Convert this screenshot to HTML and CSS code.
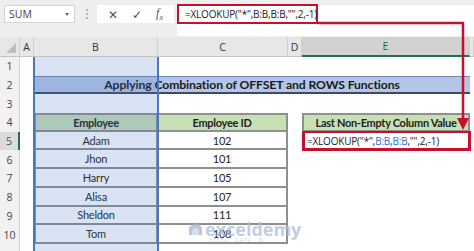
FILE: index.html
```html
<!DOCTYPE html>
<html lang="en">
<head>
    <meta charset="UTF-8">
    <title>XLOOKUP last non-empty value</title>
    <link rel="stylesheet" href="styles.css">
</head>
<body>
<div class="app">
    <div class="ribbon">
        <div class="namebox">SUM<span class="caret"></span></div>
        <div class="grip"><i></i><i></i><i></i></div>
        <div class="fbtns">
            <span class="btn">&#x2715;</span>
            <span class="btn">&#x2713;</span>
            <span class="btn fx">f<sub>x</sub></span>
        </div>
        <div class="fbar">
            <div class="fbox">=XLOOKUP("*",B:B,B:B,"",2,-1)</div>
        </div>
    </div>

    <div class="sheet">
        <!-- column headers -->
        <div class="ch corner"><span class="tri"></span></div>
        <div class="ch">A</div>
        <div class="ch">B</div>
        <div class="ch">C</div>
        <div class="ch">D</div>
        <div class="ch active">E</div>
        <div class="ch"></div>

        <!-- row 1 -->
        <div class="rh">1</div>
        <div class="c"></div><div class="c"></div><div class="c"></div><div class="c"></div><div class="c"></div><div class="c"></div>

        <!-- row 2 -->
        <div class="rh">2</div>
        <div class="c"></div>
        <div class="c title">Applying Combination of OFFSET and ROWS Functions</div>
        <div class="c"></div>

        <!-- row 3 -->
        <div class="rh">3</div>
        <div class="c"></div><div class="c"></div><div class="c"></div><div class="c"></div><div class="c"></div><div class="c"></div>

        <!-- row 4 -->
        <div class="rh">4</div>
        <div class="c"></div>
        <div class="c t th first top">Employee</div>
        <div class="c t th top">Employee ID</div>
        <div class="c"></div>
        <div class="c t th first top">Last Non-Empty Column Value</div>
        <div class="c"></div>

        <!-- row 5 -->
        <div class="rh active">5</div>
        <div class="c"></div>
        <div class="c t first">Adam</div>
        <div class="c t">102</div>
        <div class="c"></div>
        <div class="c result">=XLOOKUP("*",<span class="ref">B:B</span>,<span class="ref">B:B</span>,"",2,-1)</div>
        <div class="c"></div>

        <div class="rh">6</div>
        <div class="c"></div>
        <div class="c t first">Jhon</div>
        <div class="c t">101</div>
        <div class="c"></div><div class="c"></div><div class="c"></div>

        <div class="rh">7</div>
        <div class="c"></div>
        <div class="c t first">Harry</div>
        <div class="c t">105</div>
        <div class="c"></div><div class="c"></div><div class="c"></div>

        <div class="rh">8</div>
        <div class="c"></div>
        <div class="c t first">Alisa</div>
        <div class="c t">107</div>
        <div class="c"></div><div class="c"></div><div class="c"></div>

        <div class="rh">9</div>
        <div class="c"></div>
        <div class="c t first">Sheldon</div>
        <div class="c t">111</div>
        <div class="c"></div><div class="c"></div><div class="c"></div>

        <div class="rh">10</div>
        <div class="c"></div>
        <div class="c t first">Tom</div>
        <div class="c t">108</div>
        <div class="c"></div><div class="c"></div><div class="c"></div>

        <div class="rh"></div>
        <div class="c"></div><div class="c"></div><div class="c"></div><div class="c"></div><div class="c"></div><div class="c"></div>
    </div>

    <!-- range highlight of B:B while editing -->
    <div class="rangesel"></div>

    <svg class="arrow" width="474" height="251" viewBox="0 0 474 251">
        <polyline points="318,23 463,23 463,121" fill="none" stroke="#c8102e" stroke-width="2.5"/>
        <polygon points="457,118 469,118 463,130" fill="#c8102e"/>
    </svg>

    <div class="watermark">
        <svg width="15" height="15" viewBox="0 0 15 15">
            <path d="M7.5 1 L14 6.5 L14 14 L1 14 L1 6.5 Z" fill="#9fb3d4"/>
            <path d="M4 9 L7.5 6 L11 9 L11 14 L4 14 Z" fill="#c9d5e8"/>
        </svg>
        <div class="wm-text">
            <div class="wm-name">exceldemy</div>
            <div class="wm-sub">EXCEL &middot; DATA &middot; BI</div>
        </div>
    </div>
</div>
</body>
</html>
```

FILE: styles.css
```css
body {
    margin: 0;
    background: #fff;
    font-family: Lato, "Liberation Sans", sans-serif;
}
.app {
    position: relative;
    width: 474px;
    height: 251px;
    overflow: hidden;
}

/* formula bar area */
.ribbon {
    height: 37px;
    background: #eeeeee;
    display: flex;
    align-items: flex-start;
    padding-top: 5px;
    box-sizing: border-box;
    font-family: "Open Sans", "Liberation Sans", sans-serif;
    color: #444;
}
.namebox {
    position: relative;
    margin-left: 4px;
    width: 71px;
    height: 18px;
    background: #fff;
    border: 1px solid #d4d4d4;
    box-sizing: border-box;
    padding-left: 4px;
    font-size: 10.5px;
    line-height: 16px;
}
.caret {
    position: absolute;
    right: 5px;
    top: 7px;
    border-left: 2.5px solid transparent;
    border-right: 2.5px solid transparent;
    border-top: 3px solid #666;
}
.grip {
    width: 2px;
    margin: 4px 9px 0 11px;
    display: flex;
    flex-direction: column;
    gap: 2px;
}
.grip i {
    width: 2px;
    height: 2px;
    background: #b5b5b5;
}
.fbtns {
    width: 77px;
    height: 18px;
    background: #fff;
    display: flex;
    align-items: center;
    justify-content: space-around;
    padding: 0 4px;
    box-sizing: border-box;
}
.btn {
    font-size: 12px;
    color: #555;
}
.fx {
    font-family: "Liberation Serif", serif;
    font-style: italic;
    font-size: 12px;
}
.fx sub {
    font-size: 8px;
}
.fbar {
    flex: 1;
    margin-left: 3px;
    height: 31px;
    background: #fff;
}
.fbox {
    width: 141px;
    height: 20px;
    border: 2px solid #c8102e;
    box-sizing: border-box;
    padding-left: 6px;
    font-size: 10px;
    letter-spacing: -0.2px;
    line-height: 16px;
    white-space: nowrap;
    color: #222;
    margin-top: -1px;
}

/* worksheet grid */
.sheet {
    display: grid;
    grid-template-columns: 20px 14px 124px 130px 14px 168px 4px;
    grid-template-rows: 20px repeat(11, 18.7px);
}
.ch {
    background: #e7e7e7;
    border-right: 1px solid #d0d0d0;
    border-bottom: 1px solid #c4c4c4;
    box-sizing: border-box;
    display: flex;
    align-items: center;
    justify-content: center;
    font-family: "Open Sans", "Liberation Sans", sans-serif;
    font-size: 10.5px;
    color: #333;
}
.ch.active {
    background: #d2d2d2;
    border-bottom: 2px solid #217346;
    color: #1e6b3f;
}
.corner {
    position: relative;
}
.tri {
    position: absolute;
    right: 3px;
    bottom: 3px;
    border-left: 10px solid transparent;
    border-bottom: 10px solid #bdbdbd;
}
.rh {
    background: #f1f1f1;
    border-right: 1px solid #d0d0d0;
    box-sizing: border-box;
    display: flex;
    align-items: center;
    justify-content: center;
    font-family: "Open Sans", "Liberation Sans", sans-serif;
    font-size: 10.5px;
    color: #444;
}
.rh.active {
    background: #dcdcdc;
    border-right: 2px solid #217346;
    color: #1e6b3f;
}
.c {
    box-sizing: border-box;
    display: flex;
    align-items: center;
    justify-content: center;
    font-size: 11px;
    letter-spacing: -0.2px;
    color: #222;
    white-space: nowrap;
}
.title {
    grid-column: span 4;
    background: #b4c6e7;
    border-top: 1px solid #6f86b0;
    border-bottom: 2px solid #3d4a60;
    font-weight: bold;
    font-size: 12.2px;
    letter-spacing: -0.1px;
    color: #1a1a1a;
}
.t {
    border-right: 2px solid #8f8f8f;
    border-bottom: 2px solid #8f8f8f;
}
.t.first {
    border-left: 2px solid #8f8f8f;
}
.t.top {
    border-top: 2px solid #8f8f8f;
}
.th {
    background: #c6e0b4;
    font-weight: bold;
    font-size: 11px;
    letter-spacing: -0.3px;
}
.result {
    justify-content: flex-start;
    padding-left: 2px;
    margin: -1px -1px -1px 0;
    border: 3px solid #c8102e;
    border-top-width: 2px;
    font-family: "Open Sans", "Liberation Sans", sans-serif;
    font-size: 10px;
    letter-spacing: -0.2px;
}
.ref {
    color: #2f6fd6;
}

/* overlays */
.rangesel {
    position: absolute;
    left: 33px;
    top: 57px;
    width: 126px;
    height: 200px;
    border-left: 2px solid #4a78c8;
    border-right: 2px solid #4a78c8;
    background: rgba(68, 114, 196, 0.2);
    box-sizing: border-box;
}
.arrow {
    position: absolute;
    left: 0;
    top: 0;
}
.watermark {
    position: absolute;
    left: 188px;
    top: 221px;
    display: flex;
    align-items: flex-start;
    gap: 2px;
    opacity: 0.75;
}
.wm-text {
    display: flex;
    flex-direction: column;
}
.wm-name {
    font-family: "Open Sans", sans-serif;
    font-weight: bold;
    font-size: 18px;
    line-height: 16px;
    color: #aebdd8;
}
.wm-sub {
    font-family: "Open Sans", sans-serif;
    font-size: 5px;
    letter-spacing: 1px;
    color: #b8c4d8;
    padding-left: 4px;
}
```
